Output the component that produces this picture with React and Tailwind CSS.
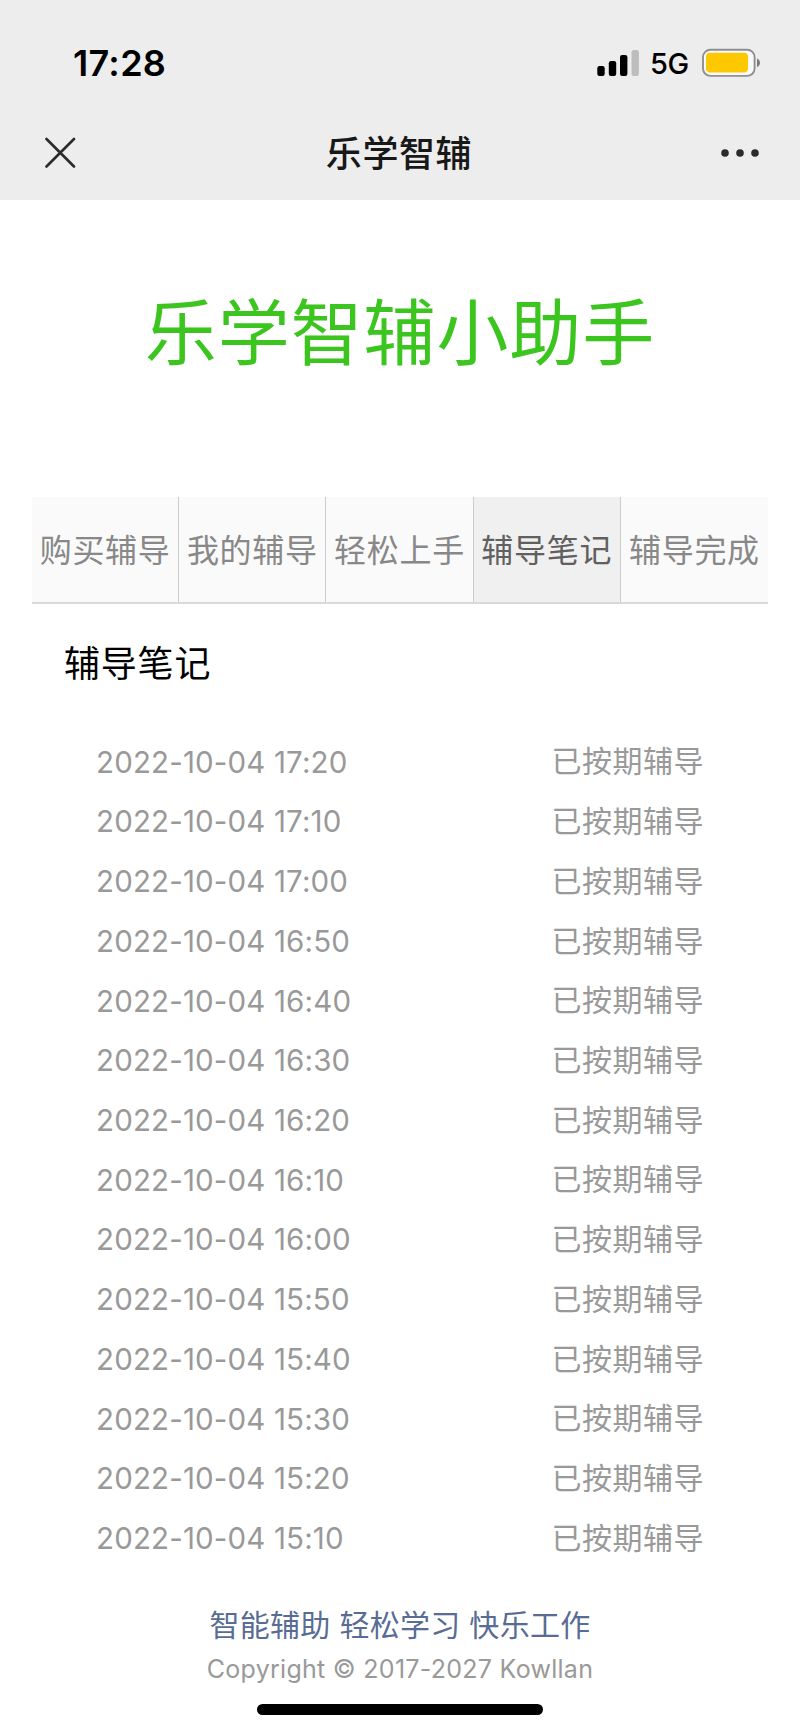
import { useState } from "react";

const tabs = ["购买辅导", "我的辅导", "轻松上手", "辅导笔记", "辅导完成"];

const times = [
  "17:20",
  "17:10",
  "17:00",
  "16:50",
  "16:40",
  "16:30",
  "16:20",
  "16:10",
  "16:00",
  "15:50",
  "15:40",
  "15:30",
  "15:20",
  "15:10",
];

function StatusBar() {
  return (
    <div className="flex h-[126px] items-center justify-between pl-[73px] pr-[39px]">
      <span className="text-[36px] font-semibold tracking-[0.3px] text-black">
        17:28
      </span>
      <div className="flex items-center">
        <svg width="43" height="28" viewBox="0 0 43 28">
          <rect x="0.3" y="17" width="7.4" height="10" rx="2.2" fill="#000" />
          <rect x="11.8" y="12" width="7.4" height="15" rx="2.2" fill="#000" />
          <rect x="23" y="6" width="7.4" height="21" rx="2.2" fill="#000" />
          <rect x="34.5" y="1" width="7.4" height="26" rx="2.2" fill="#bdbdbd" />
        </svg>
        <span className="ml-[10px] w-[41px] pt-[2px] text-[29px] font-medium tracking-[-0.5px] text-black">
          5G
        </span>
        <svg className="ml-[11px]" width="59" height="30" viewBox="0 0 59 30">
          <rect x="1" y="1.7" width="51.6" height="26.2" rx="7.5" fill="#fafafa" stroke="#8e8e93" strokeWidth="1.9" />
          <rect x="4" y="4.8" width="42" height="19.6" rx="3.8" fill="#fdc800" />
          <path d="M55 10.5c4 1.4 4 7.2 0 8.6z" fill="#7d7d7f" />
        </svg>
      </div>
    </div>
  );
}

function NavBar() {
  return (
    <div className="flex h-[54px] items-center justify-between pl-[45px] pr-[41px]">
      <svg className="w-[32px]" height="32" viewBox="0 0 32 32">
        <path d="M1.5 2L29 29.500M29 2L1.5 29.500" stroke="#2b2b2b" strokeWidth="2.6" strokeLinecap="round" />
      </svg>
      <h1 className="pt-[2px] text-[36px] font-medium tracking-[0.6px] text-[#181818]">
        乐学智辅
      </h1>
      <svg width="38" height="8" viewBox="0 0 38 8">
        <circle cx="4" cy="4" r="3.8" fill="#2b2b2b" />
        <circle cx="19" cy="4" r="3.8" fill="#2b2b2b" />
        <circle cx="34" cy="4" r="3.8" fill="#2b2b2b" />
      </svg>
    </div>
  );
}

function App() {
  const [active, setActive] = useState(3);

  return (
    <div className="flex h-[1732px] w-[800px] flex-col overflow-hidden bg-white font-[Inter,'Noto_Sans_CJK_SC',sans-serif]">
      <header className="h-[200px] bg-[#ededed]">
        <StatusBar />
        <NavBar />
      </header>

      <div className="flex h-[297px] items-center justify-center pb-[31px]">
        <h2 className="text-[72px] leading-none tracking-[0.9px] text-[#3cc51f]">
          乐学智辅小助手
        </h2>
      </div>

      <nav className="mx-[32px] grid h-[107px] grid-cols-5 border-b-2 border-[#d9d9d9]">
        {tabs.map((tab, index) => (
          <button
            key={tab}
            onClick={() => setActive(index)}
            className={`border-r border-[#cccccc] pt-[2px] text-[32px] tracking-[0.7px] last:border-r-0 ${
              active === index
                ? "bg-[#f0f0f0] text-[#606060]"
                : "bg-[#fafafa] text-[#888888]"
            }`}
          >
            {tab}
          </button>
        ))}
      </nav>

      <h3 className="flex h-[128px] items-center pb-[8px] pl-[64px] text-[36px] tracking-[0.8px] text-black">
        {tabs[active]}
      </h3>

      <ul className="pl-[96px] pr-[96px] text-[30px] text-[#999999]">
        {times.map((time) => (
          <li key={time} className="flex h-[59.73px] items-center justify-between">
            <span className="text-[29.5px] tracking-[0.15px]">2022-10-04 {time}</span>
            <span className="tracking-[0.5px]">已按期辅导</span>
          </li>
        ))}
      </ul>

      <footer className="flex flex-col items-center pt-[27px]">
        <p className="flex h-[60px] items-center text-[30px] tracking-[0.3px] text-[#586c94]">
          智能辅助 轻松学习 快乐工作
        </p>
        <p className="flex h-[28px] items-center pt-[2px] text-[25px] tracking-[0.28px] text-[#999999]">
          Copyright © 2017-2027 Kowllan
        </p>
        <div className="mt-[21px] h-[11px] w-[286px] rounded-full bg-black" />
      </footer>
    </div>
  );
}

export default App;
